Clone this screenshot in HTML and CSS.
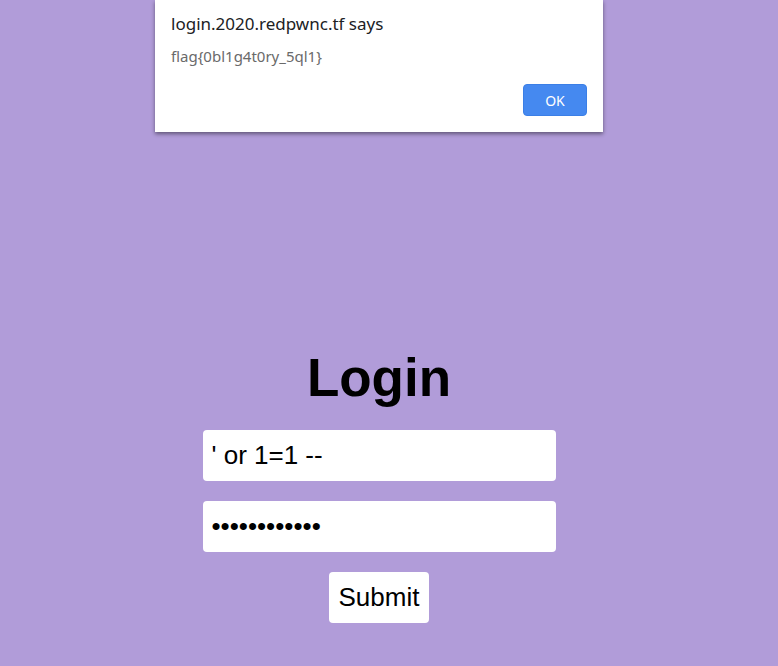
FILE: index.html
```html
<!DOCTYPE html>
<html>
<head>
<meta charset="utf-8">
<title>Login</title>
<link rel="stylesheet" href="styles.css">
</head>
<body>
<main class="page">
  <h1 class="title">Login</h1>
  <form class="form">
    <input class="field" type="text" value="' or 1=1 --">
    <input class="field" type="password" value="abcdefghijkl">
    <button class="submit" type="button">Submit</button>
  </form>
</main>
<div class="dialog">
  <div class="dialog-title">login.2020.redpwnc.tf says</div>
  <div class="dialog-msg">flag{0bl1g4t0ry_5ql1}</div>
  <div class="dialog-actions"><button class="ok" type="button">OK</button></div>
</div>
</body>
</html>
```
FILE: styles.css
```css
html, body {
  margin: 0;
  padding: 0;
}
body {
  background: #b19cd9;
  width: 778px;
  height: 666px;
  overflow: hidden;
  font-family: "Liberation Sans", Arial, sans-serif;
}
.page {
  display: flex;
  flex-direction: column;
  align-items: center;
  padding-top: 348px;
  padding-right: 20px;
}
.title {
  margin: 0;
  font-size: 53px;
  line-height: 59px;
  font-weight: bold;
  color: #000;
}
.form {
  display: flex;
  flex-direction: column;
  align-items: center;
  gap: 20px;
  margin-top: 23px;
}
.field {
  box-sizing: border-box;
  width: 353px;
  height: 51px;
  border: 0;
  border-radius: 4px;
  padding: 0 9px;
  background: #fff;
  font-family: "Liberation Sans", Arial, sans-serif;
  font-size: 26px;
  color: #000;
  outline: none;
}
.submit {
  box-sizing: border-box;
  height: 51px;
  width: 100px;
  border: 0;
  border-radius: 4px;
  padding: 0;
  background: #fff;
  font-family: "Liberation Sans", Arial, sans-serif;
  font-size: 26px;
  color: #000;
}
.dialog {
  position: absolute;
  left: 155px;
  top: 0;
  width: 448px;
  height: 132px;
  box-sizing: border-box;
  background: #fff;
  box-shadow: 0 2px 4px rgba(0, 0, 0, 0.45);
  padding: 12px 16px 0 16px;
  font-family: "Noto Sans", "Open Sans", sans-serif;
  display: flex;
  flex-direction: column;
}
.dialog-title {
  font-size: 17px;
  line-height: 24px;
  color: #202124;
}
.dialog-msg {
  margin-top: 10px;
  font-size: 15px;
  line-height: 21px;
  color: #6a6a6a;
}
.dialog-actions {
  display: flex;
  justify-content: flex-end;
  margin-top: 17px;
}
.ok {
  width: 64px;
  height: 32px;
  border: 1px solid #3b7fe6;
  border-radius: 4px;
  background: #4589f0;
  color: #fff;
  font-family: "Noto Sans", "Open Sans", sans-serif;
  font-size: 14px;
  padding: 0;
}
```
